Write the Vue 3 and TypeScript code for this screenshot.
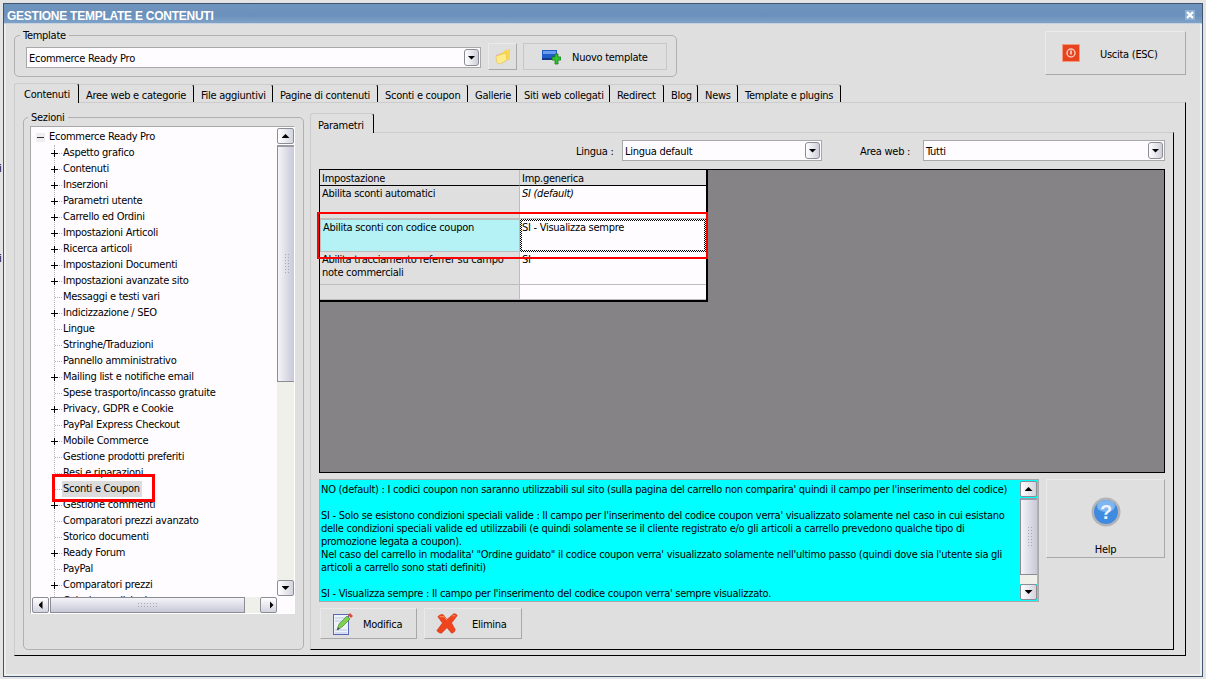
<script setup lang="ts">
interface TreeRow { label: string; plus: boolean; selected?: boolean }
const plusLabels = new Set(['Aspetto grafico','Contenuti','Inserzioni','Parametri utente','Carrello ed Ordini','Impostazioni Articoli','Ricerca articoli','Impostazioni Documenti','Impostazioni avanzate sito','Indicizzazione / SEO','Mailing list e notifiche email','Privacy, GDPR e Cookie','Mobile Commerce','Gestione commenti','Ready Forum','Comparatori prezzi'])
const labels = ['Aspetto grafico','Contenuti','Inserzioni','Parametri utente','Carrello ed Ordini','Impostazioni Articoli','Ricerca articoli','Impostazioni Documenti','Impostazioni avanzate sito','Messaggi e testi vari','Indicizzazione / SEO','Lingue','Stringhe/Traduzioni','Pannello amministrativo','Mailing list e notifiche email','Spese trasporto/incasso gratuite','Privacy, GDPR e Cookie','PayPal Express Checkout','Mobile Commerce','Gestione prodotti preferiti','Resi e riparazioni','Sconti e Coupon','Gestione commenti','Comparatori prezzi avanzato','Storico documenti','Ready Forum','PayPal','Comparatori prezzi','Calcolo spedizioni']
const rows: TreeRow[] = labels.map(label => ({ label, plus: plusLabels.has(label), selected: label === 'Sconti e Coupon' }))
const tabs = [
  { label: 'Contenuti', w: 65, active: true },
  { label: 'Aree web e categorie', w: 115 },
  { label: 'File aggiuntivi', w: 79 },
  { label: 'Pagine di contenuti', w: 105 },
  { label: 'Sconti e coupon', w: 90 },
  { label: 'Gallerie', w: 49 },
  { label: 'Siti web collegati', w: 93 },
  { label: 'Redirect', w: 54 },
  { label: 'Blog', w: 34 },
  { label: 'News', w: 40 },
  { label: 'Template e plugins', w: 103 },
]
const infoLines = [
  "NO (default) : I codici coupon non saranno utilizzabili sul sito (sulla pagina del carrello non comparira' quindi il campo per l'inserimento del codice)",
  '',
  "SI - Solo se esistono condizioni speciali valide : Il campo per l'inserimento del codice coupon verra' visualizzato solamente nel caso in cui esistano",
  "delle condizioni speciali valide ed utilizzabili (e quindi solamente se il cliente registrato e/o gli articoli a carrello prevedono qualche tipo di",
  'promozione legata a coupon).',
  `Nel caso del carrello in modalita' "Ordine guidato" il codice coupon verra' visualizzato solamente nell'ultimo passo (quindi dove sia l'utente sia gli`,
  'articoli a carrello sono stati definiti)',
  '',
  "SI - Visualizza sempre : Il campo per l'inserimento del codice coupon verra' sempre visualizzato.",
]
</script>

<template>
  <div class="page">
    <span class="stray s1">i</span>
    <span class="stray s2">i</span>
    <div class="window">
      <div class="title">
        <span>GESTIONE TEMPLATE E CONTENUTI</span>
        <svg class="close" width="10" height="10" viewBox="0 0 10 10"><rect width="10" height="10" fill="#8fb0d2"/><path d="M2 2l6 6M8 2l-6 6" stroke="#fff" stroke-width="2.2"/></svg>
      </div>
      <div class="body">
        <div class="top">
          <div class="group tpl">
            <span class="legend">Template</span>
            <div class="tpl-row">
              <div class="select sel-tpl">
                <span>Ecommerce Ready Pro</span>
                <span class="drop"><i class="arrow"></i></span>
              </div>
              <button class="btn folder">
                <svg width="16" height="16" viewBox="0 0 16 16">
                  <path d="M1 6l8-3V2l6-2v10L5 15z" fill="#d9b0e8"/>
                  <path d="M4 5l5-2V2l6-2v10L6 14z" fill="#f7d84e"/>
                  <path d="M1 7l10-3 1 7-7 4-3-1z" fill="#fdeb8c" stroke="#e2b83a" stroke-width=".5"/>
                </svg>
              </button>
              <button class="btn nuovo">
                <svg width="19" height="16" viewBox="0 0 19 16">
                  <rect x="0" y="1" width="15" height="9" fill="#1f5ec9"/>
                  <rect x="1" y="2" width="13" height="3" fill="#6a9cef"/>
                  <rect x="0" y="9" width="15" height="2" fill="#123a86"/>
                  <path d="M10 8h3V5h3v3h3v3h-3v4h-3v-4h-3z" fill="#33c433" stroke="#167a16" stroke-width=".8"/>
                </svg>
                <span>Nuovo template</span>
              </button>
            </div>
          </div>
          <button class="btn uscita">
            <svg width="18" height="18" viewBox="0 0 18 18">
              <rect width="18" height="18" fill="#e8431f"/>
              <rect x=".5" y=".5" width="17" height="17" fill="none" stroke="#f49a80"/>
              <circle cx="9" cy="9" r="4" fill="none" stroke="#f8c6b4" stroke-width="1.500"/>
              <path d="M9 6.500v4" stroke="#fbe2d8" stroke-width="1.500"/>
            </svg>
            <span>Uscita (ESC)</span>
          </button>
        </div>
        <div class="tabs">
          <div v-for="t in tabs" :key="t.label" class="tab" :class="{ active: t.active }" :style="{ width: t.w + 'px' }">{{ t.label }}</div>
        </div>
        <div class="panel">
          <div class="group sezioni">
            <span class="legend">Sezioni</span>
            <div class="tree">
              <div class="tree-main">
                <div class="tree-list">
                  <div class="vline"></div>
                  <div class="row root"><span class="exp minus"></span><span class="txt">Ecommerce Ready Pro</span></div>
                  <div v-for="r in rows" :key="r.label" class="row child">
                    <span class="dots"></span>
                    <span v-if="r.plus" class="exp plus"></span>
                    <span class="txt" :class="{ sel: r.selected }">{{ r.label }}</span>
                  </div>
                </div>
                <div class="vscroll tree-v">
                  <span class="sb-btn"><i class="arrow up"></i></span>
                  <span class="thumb v"><i class="grip"></i></span>
                  <span class="track"></span>
                  <span class="sb-btn"><i class="arrow"></i></span>
                </div>
              </div>
              <div class="hscroll">
                <span class="sb-btn"><i class="arrow left"></i></span>
                <span class="thumb h"><i class="grip-h"></i></span>
                <span class="track"></span>
                <span class="sb-btn"><i class="arrow right"></i></span>
              </div>
            </div>
          </div>
          <div class="right">
            <div class="subtabs"><div class="tab active sub">Parametri</div></div>
            <div class="subpanel">
              <div class="filters">
                <label class="f1">Lingua :</label>
                <div class="select sel-lang"><span>Lingua default</span><span class="drop"><i class="arrow"></i></span></div>
                <label class="f2">Area web :</label>
                <div class="select sel-area"><span>Tutti</span><span class="drop"><i class="arrow"></i></span></div>
              </div>
              <div class="gridarea">
                <div class="table">
                  <div class="c head">Impostazione</div><div class="c head h2">Imp.generica</div>
                  <div class="c k r1">Abilita sconti automatici</div><div class="c v r1 it">SI (default)</div>
                  <div class="c k r2 cur">Abilita sconti con codice coupon</div>
                  <div class="c v focus"><div class="focus-in">SI - Visualizza sempre</div></div>
                  <div class="c k r3">Abilita tracciamento referrer su campo<br>note commerciali</div><div class="c v r3">SI</div>
                  <div class="c k"></div><div class="c v"></div>
                </div>
              </div>
              <div class="lower">
                <div class="lower-left">
                  <div class="info">
                    <div class="info-text">
                      <div v-for="(l, i) in infoLines" :key="i" class="ln">{{ l }}</div>
                    </div>
                    <div class="vscroll info-v">
                      <span class="sb-btn"><i class="arrow up"></i></span>
                      <span class="thumb v"><i class="grip"></i></span>
                      <span class="track"></span>
                      <span class="sb-btn"><i class="arrow"></i></span>
                    </div>
                  </div>
                  <div class="actions">
                    <button class="btn act mod">
                      <svg width="20" height="22" viewBox="0 0 20 22">
                        <rect x=".5" y="1.500" width="15" height="20" fill="#eef2fb" stroke="#5a66b8"/>
                        <path d="M2 5h12M2 8h12M2 17h12M2 20h12" stroke="#b8c4e4"/>
                        <path d="M4 17l2-6 8-8 3 3-8 8z" fill="#7ed04e" stroke="#4a8a2a" stroke-width=".7"/>
                        <path d="M15 2l2-2 3 3-2 2z" fill="#e24a3a"/>
                        <path d="M4 17l1-3 2 2z" fill="#555"/>
                      </svg>
                      <span>Modifica</span>
                    </button>
                    <button class="btn act eli">
                      <svg width="22" height="22" viewBox="0 0 24 24">
                        <path d="M2 4c2-2 4-3 6-2l4 5 7-6c2-.5 4 .5 4 2l-6 8 4 7c0 2-2 4-4 4l-5-6-6 6c-2 0-4-1-5-3l6-8z" fill="#f0441c" stroke="#c8321a" stroke-width=".6"/>
                        <path d="M4 4l5 0 3 4M18 3l3 0" stroke="#ff9a70" fill="none"/>
                      </svg>
                      <span>Elimina</span>
                    </button>
                  </div>
                </div>
                <button class="btn help">
                  <svg width="30" height="30" viewBox="0 0 30 30">
                    <circle cx="15" cy="15" r="14.500" fill="#b4b4b8"/>
                    <circle cx="15" cy="15" r="12" fill="#3f8be0"/>
                    <ellipse cx="15" cy="9" rx="9" ry="6" fill="#7fb6f0"/>
                    <text x="15" y="22" text-anchor="middle" font-family="Liberation Sans" font-weight="700" font-size="20" fill="#eef2ff">?</text>
                  </svg>
                  <span>Help</span>
                </button>
              </div>
            </div>
          </div>
        </div>
      </div>
    </div>
    <div class="mark mark-row"></div>
    <div class="mark mark-tree"></div>
  </div>
</template>

<style>
html, body { margin: 0; background: #e4e4e4; }
</style>

<style scoped>
.page {
  position: relative;
  width: 1206px;
  height: 679px;
  overflow: hidden;
  background: #e4e4e4;
  font-family: "DejaVu Sans Condensed", "DejaVu Sans", sans-serif;
  font-size: 11px;
  line-height: 13px;
  letter-spacing: -0.27px;
  color: #000;
}
.stray { position: absolute; left: -1px; font-size: 11px; }
.s1 { top: 162px; }
.s2 { top: 252px; }
.window {
  position: absolute;
  left: 3px;
  top: 3px;
  width: 1200px;
  height: 674px;
  box-sizing: border-box;
  border: 1px solid #40546c;
  background: #dfdfdf;
}
.title {
  height: 20px;
  box-sizing: border-box;
  padding: 6px 6px 0 3px;
  display: flex;
  justify-content: space-between;
  align-items: flex-start;
  background: linear-gradient(#6f95bf, #6a90bb 60%, #7fa2c8);
  color: #fff;
  font-family: "Liberation Sans", sans-serif;
  font-size: 12px;
  font-weight: 700;
  letter-spacing: -0.25px;
  border-bottom: 1px solid #c4d2e2;
}
.close { margin-right: 1px; }
.body {
  height: 652px;
  box-sizing: border-box;
  border-left: 2px solid #ededed;
  border-right: 2px solid #ededed;
  border-bottom: 2px solid #ededed;
}
.top {
  height: 60px;
  box-sizing: border-box;
  padding: 7px 14px 0 8px;
  display: flex;
  justify-content: space-between;
  align-items: flex-start;
}
.group {
  position: relative;
  box-sizing: border-box;
  border: 1px solid #b0b0b0;
  border-radius: 5px;
}
.legend {
  position: absolute;
  top: -7px;
  left: 5px;
  padding: 0 3px;
  background: #dfdfdf;
}
.sezioni .legend { left: 4px; }
.tpl {
  margin-top: 4px;
  width: 663px;
  height: 42px;
  padding: 11px 0 0 11px;
}
.tpl-row { display: flex; align-items: flex-start; }
.select {
  display: flex;
  align-items: center;
  justify-content: space-between;
  box-sizing: border-box;
  height: 21px;
  border: 1px solid #a8a8a8;
  background: #fffcff;
  padding: 0 1px 0 2px;
}
.select > span:first-child { padding-top: 2px; }
.sel-tpl { width: 455px; }
.drop {
  width: 15px;
  height: 17px;
  box-sizing: border-box;
  border: 1px solid #8c8c94;
  border-radius: 3px;
  background: linear-gradient(90deg, #fff, #cfcfdc);
  display: flex;
  align-items: center;
  justify-content: center;
}
.arrow {
  display: block;
  width: 8px;
  height: 4px;
  background: #000;
  clip-path: polygon(0 0, 100% 0, 50% 100%);
}
.arrow.up { clip-path: polygon(50% 0, 100% 100%, 0 100%); }
.arrow.left { width: 4px; height: 8px; clip-path: polygon(100% 0, 100% 100%, 0 50%); }
.arrow.right { width: 4px; height: 8px; clip-path: polygon(0 0, 100% 50%, 0 100%); }
.btn {
  font: inherit;
  letter-spacing: inherit;
  color: #000;
  padding: 0;
  box-sizing: border-box;
  background: #dfdfdf;
  border: 1px solid;
  border-color: #eaeaea #a8a8a8 #a8a8a8 #eaeaea;
  display: flex;
  align-items: center;
}
.btn > span { padding-top: 2px; }
.folder { width: 29px; height: 27px; margin: -4px 0 0 7px; justify-content: center; }
.nuovo { width: 144px; height: 27px; margin: -4px 0 0 6px; padding-left: 18px; gap: 11px; border-color: #c8c8c8; }
.uscita { width: 141px; height: 44px; padding-left: 16px; gap: 20px; }
.tabs { display: flex; height: 18px; margin-left: 8px; align-items: flex-end; }
.tab {
  height: 18px;
  box-sizing: border-box;
  border-top: 1px solid #cccccc;
  border-right: 1px solid #000;
  border-top-right-radius: 3px;
  padding: 4px 0 0 7px;
  white-space: nowrap;
  position: relative;
}
.tab.active {
  height: 20px;
  padding-top: 4px;
  padding-left: 9px;
  border-left: 1px solid #cccccc;
  border-top-left-radius: 3px;
  margin-bottom: -1px;
  background: #dfdfdf;
  z-index: 1;
}
.panel {
  width: 1172px;
  height: 554px;
  margin-left: 8px;
  box-sizing: border-box;
  border: 1px solid;
  border-color: #cccccc #000 #000 #cccccc;
  padding: 14px 0 0 8px;
  display: flex;
  align-items: flex-start;
}
.sezioni {
  width: 281px;
  height: 533px;
  padding: 8px 0 0 6px;
  flex: none;
}
.tree {
  width: 265px;
  height: 488px;
  box-sizing: border-box;
  border: 1px solid #a8a8a8;
  background: #fffcff;
  display: flex;
  flex-direction: column;
  border-right-color: #fff;
  border-bottom-color: #fff;
}
.tree-main { display: flex; height: 470px; padding-top: 1px; box-sizing: border-box; flex: none; }
.tree-list {
  position: relative;
  width: 246px;
  overflow: hidden;
  flex: none;
  padding: 1px 0 0 1px;
  box-sizing: border-box;
}
.vline {
  position: absolute;
  left: 23px;
  top: 17px;
  height: 470px;
  border-left: 1px dotted #b4b4b4;
}
.row { height: 16px; display: flex; align-items: center; position: relative; white-space: nowrap; }
.root { padding-left: 16px; }
.child { padding-left: 30px; }
.dots {
  position: absolute;
  left: 23px;
  top: 8px;
  width: 7px;
  border-top: 1px dotted #b4b4b4;
}
.txt { padding: 0 2px 0 1px; line-height: 16px; position: relative; }
.txt.sel { background: #dcdcdc; }
.exp {
  position: absolute;
  width: 9px;
  height: 9px;
  top: 4px;
}
.exp.minus { left: 4px; background: linear-gradient(#333, #333) center / 7px 1px no-repeat, #eee; }
.exp.plus {
  left: 18px;
  background:
    linear-gradient(#000, #000) center / 7px 1px no-repeat,
    linear-gradient(#000, #000) center / 1px 7px no-repeat,
    #fffcff;
}
.vscroll { width: 17px; display: flex; flex-direction: column; flex: none; }
.tree-v { height: 468px; }
.sb-btn {
  width: 17px;
  height: 16px;
  flex: none;
  box-sizing: border-box;
  border: 1px solid #8c8c94;
  border-radius: 2px;
  background: linear-gradient(90deg, #fff, #d4d4e0);
  display: flex;
  align-items: center;
  justify-content: center;
}
.thumb {
  box-sizing: border-box;
  display: flex;
  align-items: center;
  justify-content: center;
  border: 1px solid #8c8c94;
}
.thumb.v {
  background: linear-gradient(90deg, #f4f4f8, #c8c8d8);
  border-top: 2px solid #9a9aa4;
}
.tree-v .thumb { height: 237px; margin-top: 1px; }
.track { flex: 1; background: #f0f0ea; }
.grip {
  width: 7px;
  height: 22px;
  background: radial-gradient(circle, #a8a8b4 1px, transparent 1px) 0 0 / 3px 3px;
}
.grip-h {
  width: 22px;
  height: 7px;
  background: radial-gradient(circle, #a8a8b4 1px, transparent 1px) 0 0 / 3px 3px;
}
.hscroll { display: flex; height: 16px; padding-left: 1px; width: 245px; flex: none; }
.thumb.h {
  width: 195px;
  flex: none;
  background: linear-gradient(#f4f4f8, #c8c8d8);
  margin-left: 1px;
}
.hscroll .sb-btn { background: linear-gradient(#fff, #d4d4e0); }
.right { margin-left: 6px; width: 864px; flex: none; }
.subtabs { display: flex; margin-top: -4px; height: 19px; align-items: flex-end; }
.tab.sub { width: 64px; height: 20px; padding: 5px 0 0 7px; }
.subpanel {
  height: 518px;
  box-sizing: border-box;
  border: 1px solid;
  border-color: #cccccc #000 #000 #cccccc;
  padding: 7px 8px 0 8px;
}
.filters { display: flex; align-items: center; height: 21px; }
.f1 { margin-left: 257px; width: 46px; padding-top: 2px; }
.sel-lang { width: 200px; }
.f2 { margin-left: 38px; width: 63px; padding-top: 2px; }
.sel-area { width: 242px; }
.gridarea {
  margin-top: 8px;
  width: 846px;
  height: 304px;
  box-sizing: border-box;
  border: 1px solid #000;
  background: #858385;
}
.table {
  width: 388px;
  height: 132px;
  box-sizing: border-box;
  border-right: 2px solid #000;
  border-bottom: 2px solid #000;
  background: #000;
  display: grid;
  grid-template-columns: 200px 186px;
  grid-template-rows: 16px 33px 33px 33px 15px;
  overflow: hidden;
}
.c {
  box-sizing: border-box;
  padding: 1px 3px 0 2px;
  border-bottom: 1px solid #bdbdbd;
  border-right: 1px solid #bdbdbd;
  background: #dfdfdf;
}
.head { border-bottom: 1px solid #000; padding-top: 2px; }
.h2 { border-right: 0; padding-left: 2px; }
.v { background: #fffcff; border-right: 0; padding-left: 2px; }
.it { font-style: italic; }
.cur { background: #b4f2f6; border: 1px solid #bdbdbd; padding-left: 2px; }
.focus {
  padding: 0;
  background: repeating-conic-gradient(#000 0 25%, #fff 0 50%) 0 0 / 2px 2px;
  border: 0;
}
.focus-in {
  margin: 2px;
  height: 29px;
  background: #fffcff;
  padding-left: 0;
}
.lower { display: flex; margin-top: 6px; align-items: flex-start; gap: 7px; }
.lower-left { width: 720px; flex: none; }
.info {
  height: 123px;
  box-sizing: border-box;
  border: 1px solid #a8a8a8;
  background: #00ffff;
  display: flex;
  justify-content: space-between;
}
.info-text { padding: 3px 0 0 1px; white-space: nowrap; flex: 1; min-width: 0; overflow: hidden; }
.ln { height: 13px; }
.info-v { height: 119px; width: 17px; margin: 1px 1px 0 0; }
.info-v .thumb { height: 77px; margin-top: 1px; }
.actions { display: flex; margin: 6px 0 0 1px; gap: 7px; }
.act { height: 31px; padding-left: 12px; gap: 10px; }
.mod { width: 97px; }
.eli { width: 98px; padding-left: 11px; gap: 14px; }
.help {
  width: 119px;
  height: 79px;
  flex-direction: column;
  justify-content: flex-start;
  padding-top: 17px;
  gap: 14px;
}
.mark { position: absolute; box-sizing: border-box; border: 2px solid #ff0000; pointer-events: none; }
.mark-row { left: 317px; top: 212px; width: 391px; height: 47px; }
.mark-tree { left: 52px; top: 474px; width: 103px; height: 28px; border-width: 3px; }
</style>
